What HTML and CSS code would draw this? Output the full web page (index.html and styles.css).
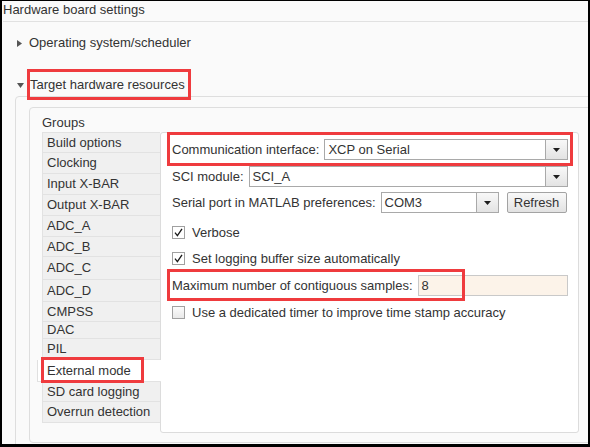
FILE: index.html
```html
<!DOCTYPE html>
<html>
<head>
<meta charset="utf-8">
<title>Hardware board settings</title>
<link rel="stylesheet" href="styles.css">
</head>
<body>
<div class="window">
  <div class="title">Hardware board settings</div>
  <div class="sec-head sec-op">
    <svg class="tri tri-right" viewBox="0 0 5 7"><polygon points="0,0 5,3.5 0,7" fill="#555"/></svg>
    <span>Operating system/scheduler</span>
  </div>
  <div class="sec-head sec-target">
    <svg class="tri tri-down" viewBox="0 0 7 5"><polygon points="0,0 7,0 3.5,5" fill="#555"/></svg>
    <span class="hl hl-target">Target hardware resources</span>
  </div>
  <div class="section">
    <div class="groups">
      <div class="groups-label">Groups</div>
      <div class="groups-body">
        <ul class="nav">
          <li class="h20">Build options</li>
          <li>Clocking</li>
          <li>Input X-BAR</li>
          <li>Output X-BAR</li>
          <li>ADC_A</li>
          <li class="h20">ADC_B</li>
          <li class="h23">ADC_C</li>
          <li class="h22">ADC_D</li>
          <li class="h20">CMPSS</li>
          <li class="h17">DAC</li>
          <li>PIL</li>
          <li class="h22 sel hl hl-ext">External mode</li>
          <li class="h20">SD card logging</li>
          <li>Overrun detection</li>
        </ul>
        <div class="pane">
          <div class="row r1 hl hl-comm">
            <span class="lbl">Communication interface:</span>
            <div class="dd dd-fill">
              <span class="dd-val">XCP on Serial</span>
              <span class="dd-btn"><svg class="arrow" viewBox="0 0 7 4"><polygon points="0,0 7,0 3.5,4" fill="#1e1e1e"/></svg></span>
            </div>
          </div>
          <div class="row r2">
            <span class="lbl">SCI module:</span>
            <div class="dd dd-fill">
              <span class="dd-val">SCI_A</span>
              <span class="dd-btn"><svg class="arrow" viewBox="0 0 7 4"><polygon points="0,0 7,0 3.5,4" fill="#1e1e1e"/></svg></span>
            </div>
          </div>
          <div class="row r3">
            <span class="lbl">Serial port in MATLAB preferences:</span>
            <div class="dd dd-com">
              <span class="dd-val">COM3</span>
              <span class="dd-btn"><svg class="arrow" viewBox="0 0 7 4"><polygon points="0,0 7,0 3.5,4" fill="#1e1e1e"/></svg></span>
            </div>
            <span class="btn">Refresh</span>
          </div>
          <div class="row chkrow r4">
            <span class="chk"><svg viewBox="0 0 11 11"><polyline points="2,5.6 4.4,8.6 9,1.8" fill="none" stroke="#1a1a1a" stroke-width="1.3"/></svg></span>
            <span class="lbl">Verbose</span>
          </div>
          <div class="row chkrow r5">
            <span class="chk"><svg viewBox="0 0 11 11"><polyline points="2,5.6 4.4,8.6 9,1.8" fill="none" stroke="#1a1a1a" stroke-width="1.3"/></svg></span>
            <span class="lbl">Set logging buffer size automatically</span>
          </div>
          <div class="row r6 hl hl-max">
            <span class="lbl">Maximum number of contiguous samples:</span>
            <span class="inp">8</span>
          </div>
          <div class="row chkrow r7">
            <span class="chk chk-off"></span>
            <span class="lbl">Use a dedicated timer to improve time stamp accuracy</span>
          </div>
        </div>
      </div>
    </div>
  </div>
</div>
</body>
</html>
```
FILE: styles.css
```css
* { box-sizing: border-box; }
html, body { margin: 0; padding: 0; }
body {
  font-family: "Liberation Sans", Arial, sans-serif;
  font-size: 13px;
  color: #333;
  background: #fafafa;
}
.window {
  width: 590px;
  height: 447px;
  border-style: solid;
  border-color: #000;
  border-width: 1px 2px 3px 2px;
  background: #fafafa;
  overflow: hidden;
}
.title {
  margin-left: 1px;
  line-height: 17px;
  padding-bottom: 3px;
  border-bottom: 1px solid #e1e1e1;
  white-space: nowrap;
}
.sec-head {
  display: flex;
  align-items: center;
  height: 20px;
  line-height: 20px;
  padding-left: 15px;
  white-space: nowrap;
}
.sec-op { margin-top: 11px; }
.sec-target { margin-top: 22px; }
.tri { display: block; flex: none; }
.tri-right { width: 5px; height: 7px; margin-right: 7px; }
.tri-down { width: 7px; height: 5px; margin-right: 6px; }

.hl { position: relative; }
.hl::after {
  content: "";
  position: absolute;
  border: 3px solid #ef3b3e;
  pointer-events: none;
}
.hl-target::after { top: -6px; bottom: -5px; left: -3px; right: -6px; }
.hl-comm::after { top: -7px; bottom: -6px; left: -5px; right: -5px; }
.hl-ext::after { top: -3px; bottom: -2px; left: 3px; width: 97px; }
.hl-max::after { top: -6px; bottom: -5px; left: -5px; width: 292px; }

.section {
  margin: 1px -12px 0 13px;
  height: 380px;
  border: 1px solid #dedede;
  border-radius: 4px;
  padding: 10px 0 0 13px;
}
.groups {
  width: 570px;
  border: 1px solid #dedede;
  border-radius: 4px;
  padding: 0 12px 9px 12px;
}
.groups-label {
  padding-top: 7px;
  line-height: 16px;
  margin-bottom: 1px;
}
.groups-body {
  display: flex;
  align-items: flex-start;
  height: 301px;
}
.nav {
  list-style: none;
  margin: 0;
  padding: 0;
  width: 118px;
  flex: none;
  border-top: 1px solid #e2e2e2;
}
.nav li {
  height: 21px;
  line-height: 20px;
  padding-left: 4px;
  background: #f0f0f0;
  border-left: 1px solid #e2e2e2;
  border-bottom: 1px solid #e2e2e2;
  white-space: nowrap;
}
.nav li.h17 { height: 17px; line-height: 16px; }
.nav li.h20 { height: 20px; line-height: 19px; }
.nav li.h22 { height: 22px; line-height: 21px; }
.nav li.h23 { height: 23px; line-height: 22px; }
.nav li.sel {
  background: #fff;
  margin-left: -5px;
  margin-right: -1px;
  padding-left: 9px;
  border-left-color: #e0e0e0;
}

.pane {
  width: 419px;
  height: 301px;
  flex: none;
  background: #fff;
  border: 1px solid #dcdcdc;
  border-radius: 3px;
  padding: 6px 10px 0 11px;
  display: flex;
  flex-direction: column;
}
.row {
  display: flex;
  align-items: center;
  height: 21px;
  line-height: 21px;
  gap: 5px;
  white-space: nowrap;
  flex: none;
}
.chkrow { gap: 7px; }
.r2 { margin-top: 6px; }
.r3 { margin-top: 5px; }
.r4 { margin-top: 9px; }
.r5 { margin-top: 5px; }
.r6 { margin-top: 6px; }
.r7 { margin-top: 6px; }

.dd {
  display: flex;
  height: 21px;
  border: 1px solid #a9a9a9;
  background: #fff;
}
.dd-fill { flex: 1; }
.dd-com { width: 118px; flex: none; }
.dd-val {
  flex: 1;
  padding-left: 3px;
  line-height: 19px;
}
.dd-btn {
  width: 22px;
  flex: none;
  border-left: 1px solid #a9a9a9;
  background: linear-gradient(#f8f8f8, #e3e3e3);
  display: flex;
  align-items: center;
  justify-content: center;
}
.arrow { display: block; width: 7px; height: 4px; }
.btn {
  width: 60px;
  height: 21px;
  margin-left: 3px;
  border: 1px solid #a3a3a3;
  border-radius: 2px;
  background: linear-gradient(#f9f9f9, #e2e2e2);
  text-align: center;
  line-height: 19px;
  flex: none;
}
.chk {
  width: 13px;
  height: 13px;
  flex: none;
  border: 1px solid #a0a0a0;
  background: #fff;
  display: flex;
  align-items: center;
  justify-content: center;
}
.chk svg { display: block; width: 11px; height: 11px; }
.chk-off { background: linear-gradient(#fbfbfb, #e9e9e9); }
.inp {
  flex: 1;
  height: 21px;
  border: 1px solid #c9c9c9;
  background: #fcf3e9;
  padding-left: 3px;
  line-height: 19px;
}
```
